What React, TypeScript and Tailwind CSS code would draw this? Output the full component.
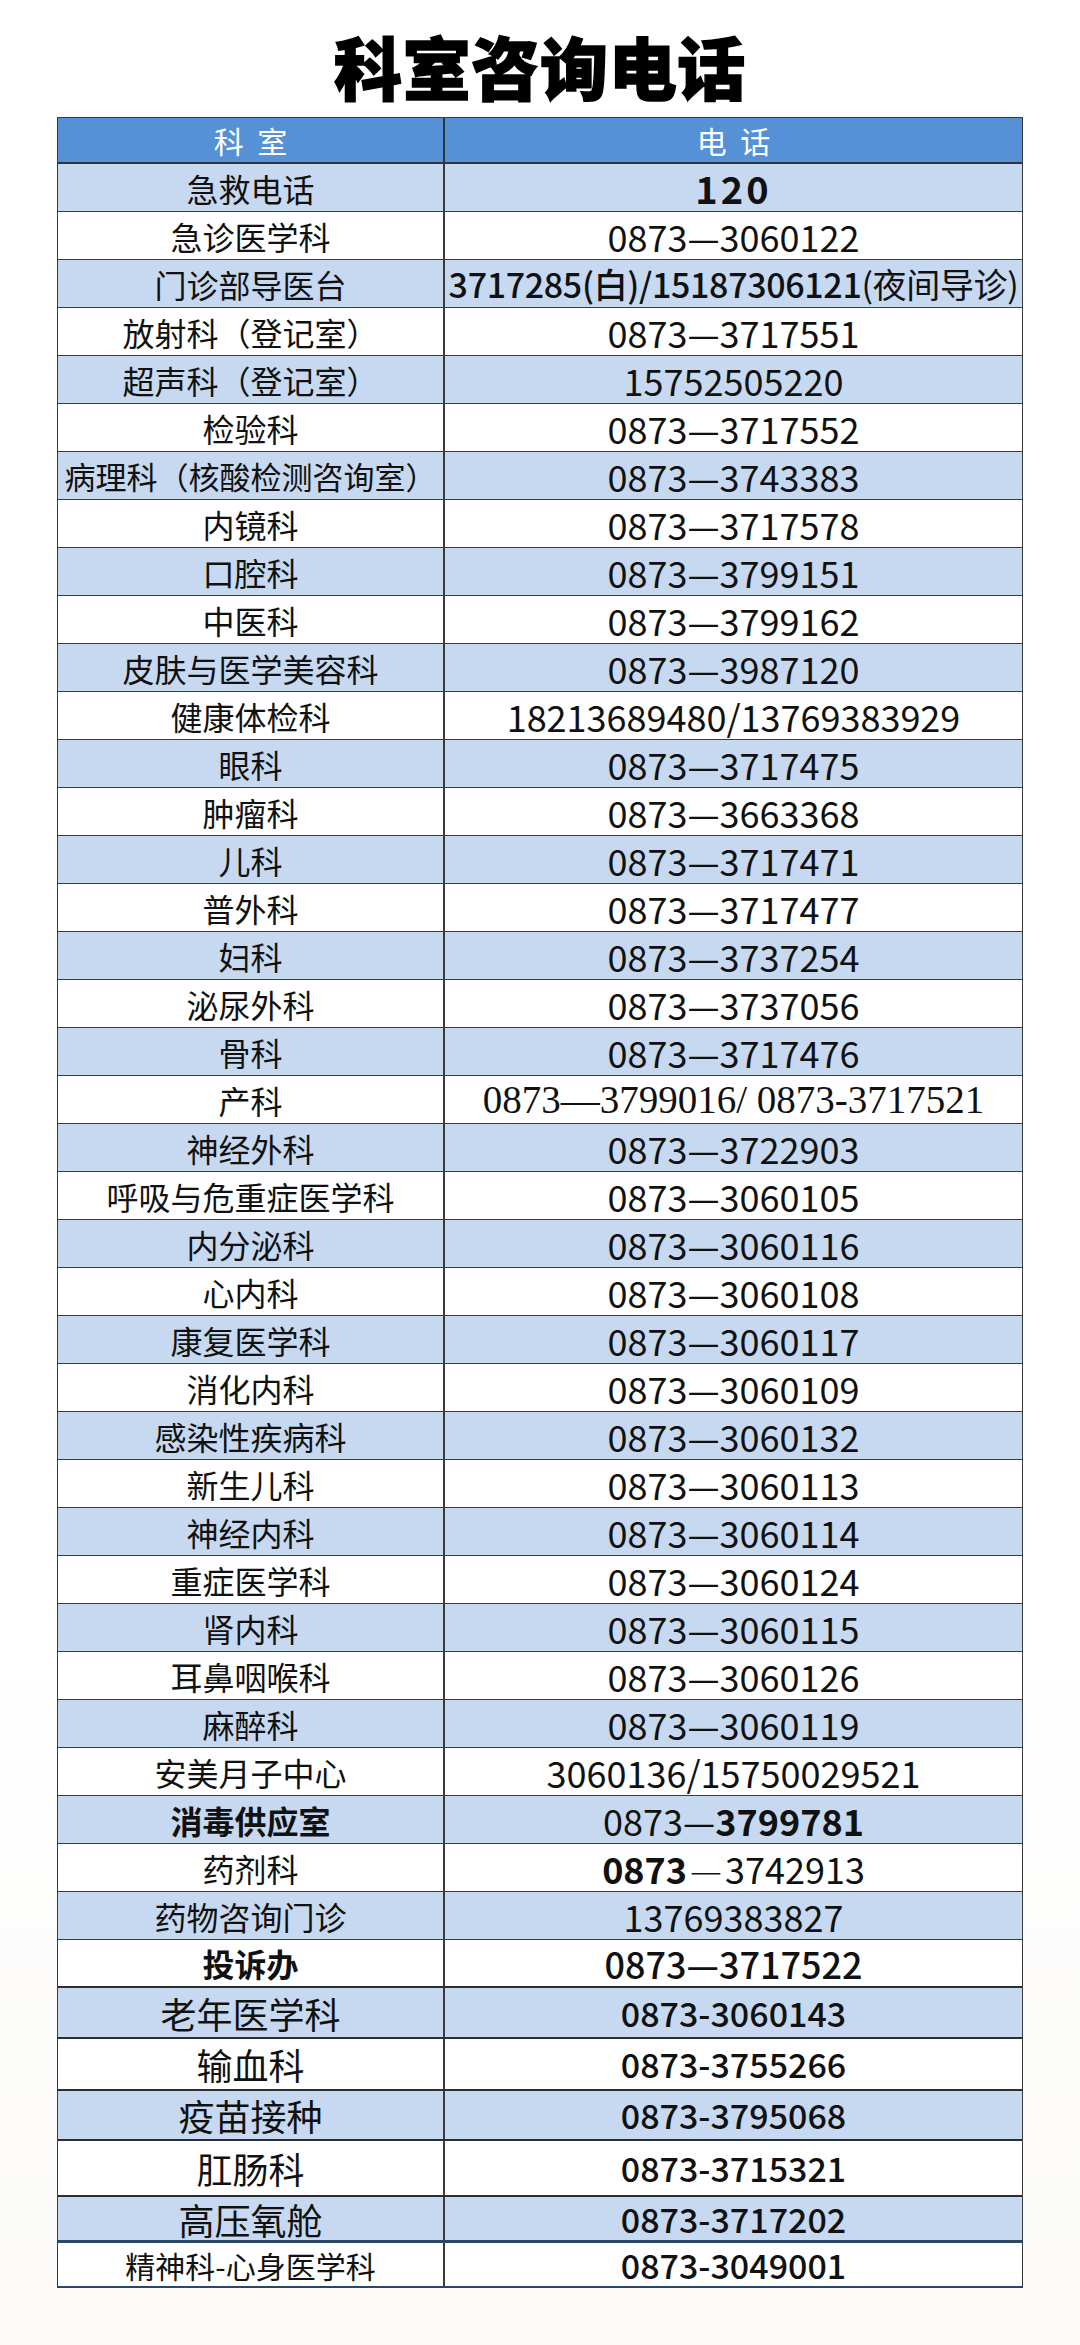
import React from 'react';

type Row = {
  name: React.ReactNode;
  phone: React.ReactNode;
  h?: string;
  nameSize?: string;
  phoneSize?: string;
  nameCls?: string;
  phoneCls?: string;
  border?: string;
};

const cjk = '[font-family:"Noto_Sans_CJK_SC",sans-serif]';

const last = 'border-b-2 border-[#2a2f36]';

const rows: Row[] = [
  { name: '急救电话', phone: '120', phoneSize: 'text-[38px]', phoneCls: 'font-bold tracking-[0.08em]' },
  { name: '急诊医学科', phone: '0873—3060122' },
  { name: '门诊部导医台', phone: <><span className="font-medium">3717285(白)/15187306121</span>(夜间导诊)</>, phoneSize: 'text-[34px]', phoneCls: 'tracking-[-0.01em]' },
  { name: '放射科（登记室）', phone: '0873—3717551' },
  { name: '超声科（登记室）', phone: '15752505220' },
  { name: '检验科', phone: '0873—3717552' },
  { name: '病理科（核酸检测咨询室）', phone: '0873—3743383', nameSize: 'text-[31px]' },
  { name: '内镜科', phone: '0873—3717578' },
  { name: '口腔科', phone: '0873—3799151' },
  { name: '中医科', phone: '0873—3799162' },
  { name: '皮肤与医学美容科', phone: '0873—3987120' },
  { name: '健康体检科', phone: '18213689480/13769383929' },
  { name: '眼科', phone: '0873—3717475' },
  { name: '肿瘤科', phone: '0873—3663368' },
  { name: '儿科', phone: '0873—3717471' },
  { name: '普外科', phone: '0873—3717477' },
  { name: '妇科', phone: '0873—3737254' },
  { name: '泌尿外科', phone: '0873—3737056' },
  { name: '骨科', phone: '0873—3717476' },
  { name: '产科', phone: '0873—3799016/ 0873-3717521', phoneSize: 'text-[39px]', phoneCls: '[font-family:"Liberation_Serif",serif]' },
  { name: '神经外科', phone: '0873—3722903' },
  { name: '呼吸与危重症医学科', phone: '0873—3060105' },
  { name: '内分泌科', phone: '0873—3060116' },
  { name: '心内科', phone: '0873—3060108' },
  { name: '康复医学科', phone: '0873—3060117' },
  { name: '消化内科', phone: '0873—3060109' },
  { name: '感染性疾病科', phone: '0873—3060132' },
  { name: '新生儿科', phone: '0873—3060113' },
  { name: '神经内科', phone: '0873—3060114' },
  { name: '重症医学科', phone: '0873—3060124' },
  { name: '肾内科', phone: '0873—3060115' },
  { name: '耳鼻咽喉科', phone: '0873—3060126' },
  { name: '麻醉科', phone: '0873—3060119' },
  { name: '安美月子中心', phone: '3060136/15750029521' },
  {
    name: '消毒供应室',
    nameCls: 'font-bold',
    phone: (
      <>
        0873—<span className="font-bold">3799781</span>
      </>
    ),
  },
  {
    name: '药剂科',
    phone: (
      <>
        <span className="font-bold">0873</span>
        <span className="mx-[3px] font-light">—</span>3742913
      </>
    ),
  },
  { name: '药物咨询门诊', phone: '13769383827' },
  { name: '投诉办', nameCls: 'font-bold', phone: '0873—3717522', phoneCls: 'font-medium', border: last },
  { name: '老年医学科', phone: '0873-3060143', h: 'h-[51px]', nameSize: 'text-[36px]', phoneSize: 'text-[34px]', phoneCls: 'font-medium', border: last },
  { name: '输血科', phone: '0873-3755266', h: 'h-[52px]', nameSize: 'text-[36px]', phoneSize: 'text-[34px]', phoneCls: 'font-medium', border: last },
  { name: '疫苗接种', phone: '0873-3795068', h: 'h-[50px]', nameSize: 'text-[36px]', phoneSize: 'text-[34px]', phoneCls: 'font-medium', border: last },
  { name: '肛肠科', phone: '0873-3715321', h: 'h-[56px]', nameSize: 'text-[36px]', phoneSize: 'text-[34px]', phoneCls: 'font-medium', border: last },
  { name: '高压氧舱', phone: '0873-3717202', h: 'h-[46px]', nameSize: 'text-[36px]', phoneSize: 'text-[34px]', phoneCls: 'font-medium', border: 'border-b-[3px] border-[#2b4766]' },
  { name: '精神科-心身医学科', phone: '0873-3049001', h: 'h-[43px]', nameSize: 'text-[30px]', phoneSize: 'text-[34px]', phoneCls: 'font-medium', border: 'border-b-0' },
];

const App: React.FC = () => {
  return (
    <div className={`w-[1080px] h-[2345px] bg-gradient-to-b from-white from-70% to-[#fbfaf8] ${cjk} text-[#111]`}>
      <h1 className="pt-[30px] h-[117px] text-center text-[68px] leading-[72px] font-black tracking-[0.01em] text-black [-webkit-text-stroke:1.5px_black]">
        科室咨询电话
      </h1>

      <div className="ml-[57px] w-[966px] border-x border-t border-[#3a3a3a] border-b-2 border-b-[#2b4766]">
        <div className="grid grid-cols-[387px_1fr] h-[46px] bg-[#5690d6] text-white text-[30px] border-b-2 border-[#2e3440]">
          <div className="flex items-center justify-center border-r-2 border-[#2e3440] tracking-[0.45em] pl-[0.45em]">
            科室
          </div>
          <div className="flex items-center justify-center tracking-[0.45em] pl-[0.45em]">
            电话
          </div>
        </div>

        {rows.map((r, i) => (
          <div
            key={i}
            className={`grid grid-cols-[387px_1fr] ${r.h ?? 'h-[48px]'} ${i % 2 === 0 ? 'bg-[#c6d9f0]' : 'bg-white'} ${r.border ?? 'border-b border-[#3d3d3d]'}`}
          >
            <div className={`flex items-center justify-center whitespace-nowrap border-r-2 border-[#3a3a3a] leading-none ${r.nameSize ?? 'text-[32px]'} ${r.nameCls ?? ''}`}>
              {r.name}
            </div>
            <div className={`flex items-center justify-center whitespace-nowrap leading-none ${r.phoneSize ?? 'text-[36px]'} ${r.phoneCls ?? ''}`}>
              {r.phone}
            </div>
          </div>
        ))}
      </div>
    </div>
  );
};

export default App;
